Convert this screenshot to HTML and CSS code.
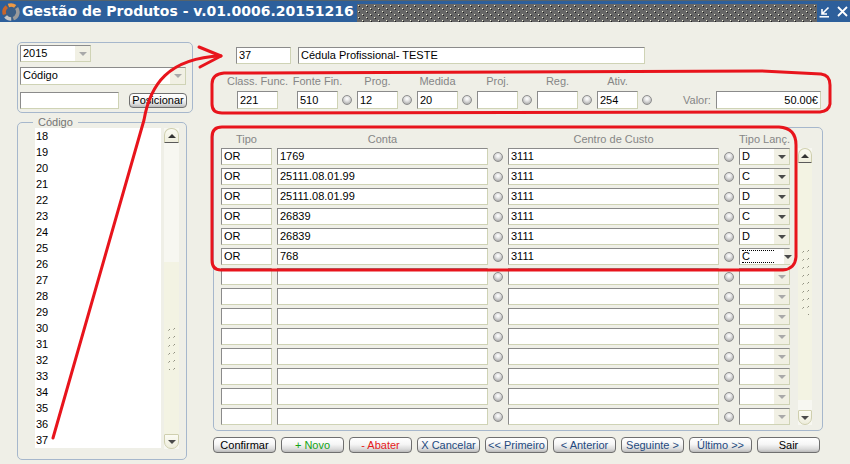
FILE: index.html
```html
<!DOCTYPE html>
<html lang="pt">
<head>
<meta charset="utf-8">
<title>Gestão de Produtos</title>
<link rel="stylesheet" href="styles.css">
</head>
<body>
<svg class="defs" width="0" height="0" aria-hidden="true">
  <defs>
    <pattern id="tbgrip" width="8" height="6" patternUnits="userSpaceOnUse">
      <rect width="8" height="6" fill="#676767"/>
      <rect x="1" y="1" width="1" height="1" fill="#f0f0d8"/>
      <rect x="2" y="2" width="1" height="1" fill="#1e1e1e"/>
      <rect x="5" y="4" width="1" height="1" fill="#f0f0d8"/>
      <rect x="6" y="5" width="1" height="1" fill="#1e1e1e"/>
    </pattern>
    <pattern id="sbgrip" width="8" height="8" patternUnits="userSpaceOnUse">
      <rect x="2" y="2" width="1" height="1" fill="#8f8f80"/>
      <rect x="1" y="3" width="1" height="1" fill="#b5b5a5"/>
      <rect x="7" y="1" width="1" height="1" fill="#8f8f80"/>
      <rect x="6" y="2" width="1" height="1" fill="#b5b5a5"/>
    </pattern>
  </defs>
</svg>
<div class="window">
  <header class="titlebar">
    <svg class="app-icon" width="18" height="18" viewBox="0 0 18 18">
      <circle cx="9" cy="9" r="8.5" fill="#3c5f86"/>
      <path d="M2.6 11.5 A7 7 0 0 1 4.8 3.6" stroke="#c9652a" stroke-width="3.6" fill="none"/>
      <path d="M6.4 2.5 A7 7 0 0 1 13.2 3.4" stroke="#ee9a45" stroke-width="3.6" fill="none"/>
      <path d="M14.6 5 A7 7 0 0 1 11.3 15.6" stroke="#9a9a9a" stroke-width="3.6" fill="none"/>
      <path d="M9.2 16 A7 7 0 0 1 3.6 13.4" stroke="#c4c4c4" stroke-width="3.6" fill="none"/>
    </svg>
    <span class="title">Gestão de Produtos - v.01.0006.20151216</span>
    <div class="grip"><svg width="100%" height="18"><rect width="100%" height="18" fill="url(#tbgrip)"/></svg></div>
    <div class="tb-btns">
      <svg width="11" height="12" viewBox="0 0 11 12"><path d="M9.5 1.5 L3.5 7.5 M3 3 L3 8 L8 8" stroke="#fff" stroke-width="1.6" fill="none"/><path d="M0.5 10.8 H10" stroke="#fff" stroke-width="1.5"/></svg>
      <svg width="11" height="11" viewBox="0 0 11 11"><path d="M1 1 L10 10 M10 1 L1 10" stroke="#fff" stroke-width="1.8" fill="none"/></svg>
    </div>
  </header>

  <div class="main">
    <aside class="left">
      <div class="search-box">
        <div class="select sel-year dim"><span class="val">2015</span><span class="drop"><i class="tri"></i></span></div>
        <div class="select sel-field dim"><span class="val">Código</span><span class="drop"><i class="tri"></i></span></div>
        <div class="search-row">
          <div class="field w-search"></div>
          <button class="btn btn-pos">Posicionar</button>
        </div>
      </div>
      <fieldset class="codes">
        <legend>Código</legend>
        <div class="codes-inner">
          <ul class="list">
            <li>18</li><li>19</li><li>20</li><li>21</li><li>22</li>
            <li>23</li><li>24</li><li>25</li><li>26</li><li>27</li>
            <li>28</li><li>29</li><li>30</li><li>31</li><li>32</li>
            <li>33</li><li>34</li><li>35</li><li>36</li><li>37</li>
          </ul>
          <div class="vscroll vs-list">
            <div class="sb-btn up"><i class="tri-up"></i></div>
            <div class="sb-space"></div>
            <div class="sb-thumb thumb-list"><svg width="9" height="43"><rect width="9" height="43" fill="url(#sbgrip)"/></svg></div>
            <div class="sb-btn down"><i class="tri"></i></div>
          </div>
        </div>
      </fieldset>
    </aside>

    <section class="right">
      <div class="head-row">
        <div class="field w-code">37</div>
        <div class="field w-name">Cédula Profissional- TESTE</div>
      </div>

      <div class="params">
        <div class="param p-first"><span class="lbl">Class. Func.</span><div class="field">221</div></div>
        <div class="param p-second"><span class="lbl">Fonte Fin.</span><div class="field">510</div></div>
        <span class="radio"></span>
        <div class="param"><span class="lbl">Prog.</span><div class="field">12</div></div>
        <span class="radio"></span>
        <div class="param"><span class="lbl">Medida</span><div class="field">20</div></div>
        <span class="radio"></span>
        <div class="param"><span class="lbl">Proj.</span><div class="field"></div></div>
        <span class="radio"></span>
        <div class="param"><span class="lbl">Reg.</span><div class="field"></div></div>
        <span class="radio"></span>
        <div class="param"><span class="lbl">Ativ.</span><div class="field">254</div></div>
        <span class="radio"></span>
        <span class="valor-lbl">Valor:</span>
        <div class="field w-valor">50.00€</div>
      </div>

      <div class="grid">
        <div class="grid-head">
          <span>Tipo</span><span>Conta</span><span></span><span>Centro de Custo</span><span></span><span>Tipo Lanç.</span>
        </div>
        <div class="grid-body">
          <div class="rows">
            <div class="row"><div class="field">OR</div><div class="field">1769</div><span class="radio"></span><div class="field">3111</div><span class="radio"></span><div class="select"><span class="val">D</span><span class="drop"><i class="tri"></i></span></div></div>
            <div class="row"><div class="field">OR</div><div class="field">25111.08.01.99</div><span class="radio"></span><div class="field">3111</div><span class="radio"></span><div class="select"><span class="val">C</span><span class="drop"><i class="tri"></i></span></div></div>
            <div class="row"><div class="field">OR</div><div class="field">25111.08.01.99</div><span class="radio"></span><div class="field">3111</div><span class="radio"></span><div class="select"><span class="val">D</span><span class="drop"><i class="tri"></i></span></div></div>
            <div class="row"><div class="field">OR</div><div class="field">26839</div><span class="radio"></span><div class="field">3111</div><span class="radio"></span><div class="select"><span class="val">C</span><span class="drop"><i class="tri"></i></span></div></div>
            <div class="row"><div class="field">OR</div><div class="field">26839</div><span class="radio"></span><div class="field">3111</div><span class="radio"></span><div class="select"><span class="val">D</span><span class="drop"><i class="tri"></i></span></div></div>
            <div class="row"><div class="field">OR</div><div class="field">768</div><span class="radio"></span><div class="field">3111</div><span class="radio"></span><div class="select"><span class="val focus">C</span><span class="drop"><i class="tri"></i></span></div></div>
            <div class="row"><div class="field"></div><div class="field"></div><span class="radio"></span><div class="field"></div><span class="radio"></span><div class="select dim"><span class="val"></span><span class="drop"><i class="tri"></i></span></div></div>
            <div class="row"><div class="field"></div><div class="field"></div><span class="radio"></span><div class="field"></div><span class="radio"></span><div class="select dim"><span class="val"></span><span class="drop"><i class="tri"></i></span></div></div>
            <div class="row"><div class="field"></div><div class="field"></div><span class="radio"></span><div class="field"></div><span class="radio"></span><div class="select dim"><span class="val"></span><span class="drop"><i class="tri"></i></span></div></div>
            <div class="row"><div class="field"></div><div class="field"></div><span class="radio"></span><div class="field"></div><span class="radio"></span><div class="select dim"><span class="val"></span><span class="drop"><i class="tri"></i></span></div></div>
            <div class="row"><div class="field"></div><div class="field"></div><span class="radio"></span><div class="field"></div><span class="radio"></span><div class="select dim"><span class="val"></span><span class="drop"><i class="tri"></i></span></div></div>
            <div class="row"><div class="field"></div><div class="field"></div><span class="radio"></span><div class="field"></div><span class="radio"></span><div class="select dim"><span class="val"></span><span class="drop"><i class="tri"></i></span></div></div>
            <div class="row"><div class="field"></div><div class="field"></div><span class="radio"></span><div class="field"></div><span class="radio"></span><div class="select dim"><span class="val"></span><span class="drop"><i class="tri"></i></span></div></div>
            <div class="row"><div class="field"></div><div class="field"></div><span class="radio"></span><div class="field"></div><span class="radio"></span><div class="select dim"><span class="val"></span><span class="drop"><i class="tri"></i></span></div></div>
          </div>
          <div class="vscroll vs-grid">
            <div class="sb-btn up"><i class="tri-up"></i></div>
            <div class="sb-thumb thumb-grid"><svg width="9" height="66"><rect width="9" height="66" fill="url(#sbgrip)"/></svg></div>
            <div class="sb-space"></div>
            <div class="sb-btn down"><i class="tri"></i></div>
          </div>
        </div>
      </div>

      <div class="actions">
        <button class="btn">Confirmar</button>
        <button class="btn t-green">+ Novo</button>
        <button class="btn t-red">- Abater</button>
        <button class="btn t-blue">X Cancelar</button>
        <button class="btn t-blue">&lt;&lt; Primeiro</button>
        <button class="btn t-blue">&lt; Anterior</button>
        <button class="btn t-blue">Seguinte &gt;</button>
        <button class="btn t-blue">Último &gt;&gt;</button>
        <button class="btn">Sair</button>
      </div>
    </section>
  </div>

  <svg class="annot" width="850" height="464" viewBox="0 0 850 464">
    <g stroke="#e8141c" stroke-width="3" fill="none" stroke-linecap="round" stroke-linejoin="round">
      <path d="M53 438 L144 120 C150 85, 168 58, 221 56"/>
      <path d="M199 47 L221 56 L200 67"/>
      <path d="M224 73 L762 71 L821 74 Q830 75 830 85 L830 104 Q829 111 820 112 L222 113 Q212 113 212 104 L212 84 Q212 74 224 73 Z"/>
      <path d="M222 127 L779 127 Q796 128 796 145 L796 257 Q795 269 783 270 L221 270 Q212 270 212 260 L212 137 Q212 127 222 127 Z"/>
    </g>
  </svg>
</div>
</body>
</html>
```

FILE: styles.css
```css
* { box-sizing: border-box; }
html, body { margin: 0; }
body {
  width: 850px;
  height: 464px;
  overflow: hidden;
  background: #efefe7;
  font: 11px/14px "Liberation Sans", Arial, sans-serif;
  color: #000;
}
.defs { position: absolute; }
.window { position: relative; width: 850px; height: 464px; }

/* title bar */
.titlebar {
  height: 22px;
  border-top: 1px solid #56636b;
  background: #2d5f9b;
  display: flex;
  align-items: center;
}
.app-icon { margin-left: 2px; flex: none; }
.title {
  margin-left: 2px;
  font: bold 14px/21px "DejaVu Sans", Verdana, sans-serif;
  color: #fff;
  white-space: nowrap;
  flex: none;
}
.grip { flex: 1; height: 18px; margin-left: 3px; align-self: flex-end; }
.grip svg { display: block; }
.tb-btns { width: 33px; flex: none; display: flex; align-items: center; gap: 7px; padding-left: 2px; }
.tb-btns svg { display: block; }

/* layout */
.main { display: flex; padding-top: 20px; }
.left { margin-left: 17px; width: 176px; flex: none; }
.right { margin-left: 20px; width: 610px; flex: none; }

/* generic controls */
.field {
  height: 17px;
  background: #fff;
  border: 1px solid;
  border-color: #8b8b8b #cfd3b5 #cfd3b5 #8b8b8b;
  padding-left: 2px;
  line-height: 15px;
  white-space: nowrap;
  overflow: hidden;
}
.select {
  display: flex;
  height: 17px;
  background: #fff;
  border: 1px solid;
  border-color: #8b8b8b #cfd3b5 #cfd3b5 #8b8b8b;
}
.select .val { flex: 1; padding-left: 2px; line-height: 15px; }
.select .val.focus {
  flex: none;
  margin: 1px 10px 1px 2px;
  padding-left: 0;
  width: 32px;
  line-height: 11px;
  border-top: 1px dotted #000;
  border-bottom: 1px dotted #000;
}
.select .drop {
  width: 15px;
  background: #f1f0e4;
  display: flex;
  align-items: center;
  justify-content: center;
}
.tri {
  display: block;
  width: 0; height: 0;
  border-left: 4px solid transparent;
  border-right: 4px solid transparent;
  border-top: 4px solid #4a4a4a;
}
.dim .tri { border-top-color: #a9a9a9; }
.tri-up {
  display: block;
  width: 0; height: 0;
  border-left: 4px solid transparent;
  border-right: 4px solid transparent;
  border-bottom: 4px solid #333;
  box-shadow: 0 2px 0 -1px transparent;
}
.radio {
  flex: none;
  width: 10px;
  height: 10px;
  border-radius: 50%;
  border: 1px solid #8e8e8e;
  background: radial-gradient(circle at 50% 35%, #ffffff 0, #e4e4e4 35%, #b4b4b4 75%, #8d8d8d 100%);
}
.btn {
  height: 16px;
  width: 63px;
  padding: 0;
  border: 1px solid #6f6f6f;
  border-radius: 4px;
  background: linear-gradient(#ffffff 0%, #f6f6f6 45%, #d9d9d9 80%, #b9b9b9 100%);
  font: 11px/14px "Liberation Sans", Arial, sans-serif;
  color: #000;
  text-align: center;
  white-space: nowrap;
}
.t-green { color: #14a314; }
.t-red { color: #e51a1a; }
.t-blue { color: #24497e; }

/* left search panel */
.search-box {
  height: 71px;
  border: 1px solid #a6b7cc;
  border-radius: 5px;
  padding: 2px 0 0 2px;
}
.sel-year { width: 71px; }
.sel-field { width: 166px; height: 18px; margin-top: 5px; }
.search-row { display: flex; margin-top: 7px; }
.w-search { width: 99px; }
.btn-pos { margin-left: 10px; width: 58px; height: 15px; margin-top: 1px; line-height: 13px; }

/* codes list */
.codes {
  margin: 3px 0 0;
  width: 170px;
  height: 344px;
  border: 1px solid #a6b7cc;
  border-radius: 5px;
  padding: 0 7px 0 17px;
  min-width: 0;
}
.codes legend {
  margin-left: -2px;
  padding: 0 5px;
  line-height: 12px;
  color: #747474;
}
.codes-inner { display: flex; }
.list {
  margin: 0;
  padding: 0;
  list-style: none;
  width: 126px;
  height: 320px;
  background: #fff;
}
.list li { height: 16px; line-height: 16px; padding-left: 1px; }

/* scrollbars */
.vscroll {
  display: flex;
  flex-direction: column;
  background: #f7f7f1;
  flex: none;
}
.vs-list { margin-left: 3px; width: 15px; height: 321px; }
.vs-grid { margin-left: 8px; width: 14px; height: 277px; }
.sb-btn {
  height: 15px;
  flex: none;
  display: flex;
  align-items: center;
  justify-content: center;
  background: linear-gradient(#fbfbf3, #eeeddc);
  border: 1px solid #cfcfae;
}
.sb-btn.up { border-radius: 7px 7px 1px 1px; border-bottom: 1px solid #5a5a5a; }
.sb-btn.down { border-radius: 1px 1px 7px 7px; }
.sb-space { flex: 1; }
.sb-thumb {
  flex: none;
  background: #f3f3e3;
  display: flex;
  align-items: center;
  justify-content: center;
}
.sb-thumb svg { display: block; }
.thumb-list { height: 172px; }
.thumb-grid { height: 237px; }

/* right column */
.head-row { display: flex; padding-top: 5px; }
.w-code { margin-left: 23px; width: 55px; }
.w-name { margin-left: 7px; width: 347px; }

.params { display: flex; align-items: flex-end; margin-top: 10px; }
.param { display: flex; flex-direction: column; align-items: center; width: 41px; flex: none; }
.param .lbl { line-height: 14px; color: #868686; white-space: nowrap; margin-bottom: 3px; }
.param .field { width: 41px; height: 18px; line-height: 16px; }
.p-first { margin-left: 24px; }
.p-second { margin-left: 19px; }
.params .radio { margin: 0 5px 4px 4px; }
.valor-lbl { margin-left: 26px; line-height: 18px; color: #868686; }
.w-valor { margin-left: 5px; width: 105px; height: 18px; line-height: 16px; text-align: right; padding-right: 2px; }

/* grid */
.grid {
  margin-top: 18px;
  height: 304px;
  border: 1px solid #a6b7cc;
  border-radius: 5px;
  padding: 4px 10px 0 7px;
}
.grid-head, .row {
  display: grid;
  grid-template-columns: 51px 211px 10px 211px 10px 51px;
  column-gap: 5px;
}
.grid-head { height: 14px; margin-bottom: 2px; color: #868686; text-align: center; white-space: nowrap; }
.grid-body { display: flex; }
.rows { display: flex; flex-direction: column; gap: 3px; }
.row { height: 17px; align-items: center; }
.row .radio { align-self: center; }

/* actions */
.actions { display: flex; gap: 5px; margin-top: 6px; }

/* annotations */
.annot { position: absolute; left: 0; top: 0; pointer-events: none; }
```
